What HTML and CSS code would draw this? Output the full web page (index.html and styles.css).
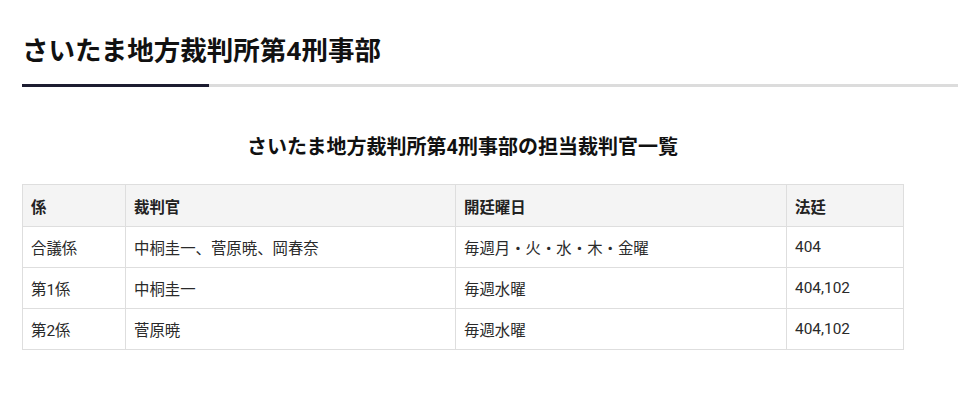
FILE: index.html
```html
<!DOCTYPE html>
<html lang="ja">
<head>
<meta charset="utf-8">
<title>さいたま地方裁判所第4刑事部</title>
<link rel="stylesheet" href="styles.css">
</head>
<body>
<header class="page-head">
  <h1 class="page-title">さいたま地方裁判所第4刑事部</h1>
  <div class="rule"><span class="rule-accent"></span></div>
</header>
<main class="content">
  <h2 class="table-title">さいたま地方裁判所第4刑事部の担当裁判官一覧</h2>
  <table class="judges">
    <colgroup>
      <col class="c1"><col class="c2"><col class="c3"><col class="c4">
    </colgroup>
    <thead>
      <tr><th>係</th><th>裁判官</th><th>開廷曜日</th><th>法廷</th></tr>
    </thead>
    <tbody>
      <tr><td>合議係</td><td>中桐圭一、菅原暁、岡春奈</td><td>毎週月・火・水・木・金曜</td><td>404</td></tr>
      <tr><td>第1係</td><td>中桐圭一</td><td>毎週水曜</td><td>404,102</td></tr>
      <tr><td>第2係</td><td>菅原暁</td><td>毎週水曜</td><td>404,102</td></tr>
    </tbody>
  </table>
</main>
</body>
</html>
```
FILE: styles.css
```css
html, body {
  margin: 0;
  padding: 0;
  background: #fff;
}
body {
  font-family: Roboto, "Noto Sans CJK JP", sans-serif;
  color: #222;
}
.page-head {
  padding: 31px 0 0 22px;
}
.page-title {
  margin: 0;
  font-size: 26.5px;
  line-height: 40px;
  font-weight: 700;
  color: #111;
  padding-bottom: 13px;
}
.rule {
  height: 3px;
  background: #dcdcdc;
  display: flex;
}
.rule-accent {
  width: 187px;
  height: 3px;
  background: #1c1c30;
}
.content {
  padding: 0 55px 0 22px;
}
.table-title {
  margin: 0;
  padding-top: 45px;
  padding-bottom: 22px;
  font-size: 20px;
  line-height: 30px;
  font-weight: 700;
  text-align: center;
  color: #111;
}
.judges {
  width: 881px;
  border-collapse: collapse;
  table-layout: fixed;
  font-size: 15.4px;
}
.c1 { width: 103px; }
.c2 { width: 330px; }
.c3 { width: 331px; }
.c4 { width: 117px; }
.judges th, .judges td {
  border: 1px solid #dedede;
  padding: 0 8px;
  height: 40px;
  text-align: left;
  vertical-align: middle;
  color: #222;
}
.judges td {
  color: #2a2a2a;
}
.judges th {
  background: #f4f4f4;
  font-weight: 700;
  height: 41px;
}
```
